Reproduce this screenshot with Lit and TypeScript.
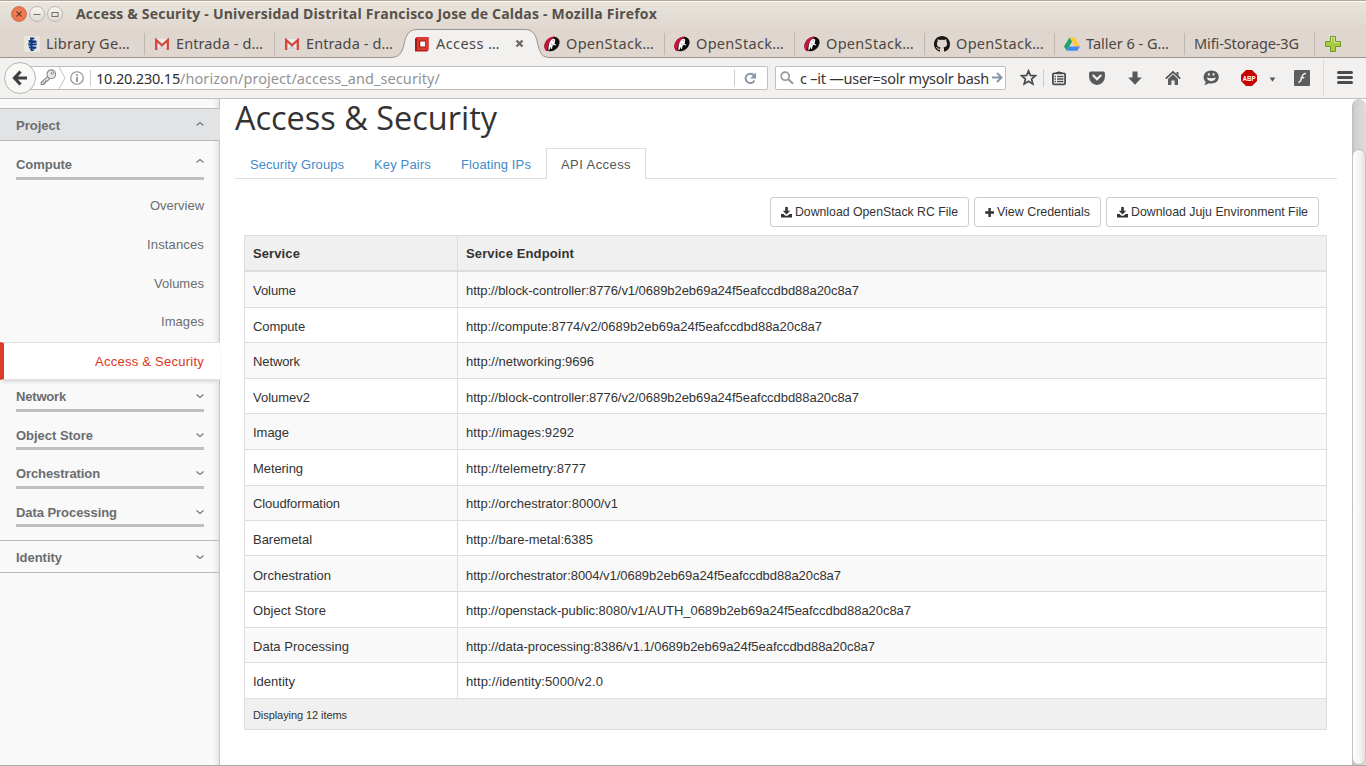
import { LitElement, html, css, svg } from "lit";
import { customElement, property } from "lit/decorators.js";

/** Inline text that is set to a given width through tracking, or through scaling when `squeeze` is on. */
@customElement("fit-text")
class FitText extends LitElement {
  @property({ type: Number }) w = 0;
  @property({ type: Boolean }) squeeze = false;
  @property() text = "";
  static styles = css`
    :host { display: inline-block; white-space: pre; position: relative; }
    .run { display: inline-block; transform-origin: 0 50%; }
  `;
  render() {
    return html`<span class="run">${this.text}</span>`;
  }
  updated() {
    const run = this.renderRoot.querySelector(".run") as HTMLElement;
    if (!run || !this.w) return;
    const natural = run.getBoundingClientRect().width;
    this.style.width = this.w + "px";
    if (this.squeeze) run.style.transform = `scaleX(${this.w / natural})`;
    else run.style.letterSpacing = (this.w - natural) / this.text.length + "px";
  }
}

const fit = (text: string, w: number, squeeze = false) =>
  html`<fit-text .text=${text} .w=${w} .squeeze=${squeeze}></fit-text>`;

const ic = (body: unknown, w = 16, h = w) =>
  html`<svg class="ic" width=${w} height=${h} viewBox="0 0 ${w} ${h}">${body}</svg>`;

const icons: Record<string, () => unknown> = {
  library: () => ic(svg`<rect width="16" height="16" fill="#e8e7dc"/><path d="M6 1.500h4l.5 1.500-1.500.5H6zM4.500 4l7.500.5 1 1.500-1.500 1H5zM3.500 7.500h9.500l-.5 1.800-7.500.4zM4.500 10.500h7.500l.5 1.500-1.500 1-5.500-.5zM6 13.500h4.500L9.500 15H7z" fill="#123a8c"/><path d="M7.500 2v12" stroke="#123a8c" stroke-width="2"/>`),
  gmail: () => ic(svg`<path d="M1.500 3h13v11h-13z" fill="#eceaea"/><path d="M3 13.500l5-5 5 5z" fill="#d4d2d2"/><path d="M2.200 14V4L8 9.300 13.800 4v10" fill="none" stroke="#d44638" stroke-width="2.300"/>`),
  horizon: () => ic(svg`<path d="M1 2.500L3 1h11.500v13L13 15.500H1z" fill="#b81c17"/><path d="M3 1h11.500v13H3z" fill="#dc3b33"/><path d="M1 4h2M1 8h2M1 12h2" stroke="#7e120e"/><path d="M5 4.500h7v7H5z" fill="#a51813"/><path d="M6.200 5.500h5v5h-5z" fill="#fff"/>`),
  rdo: () => ic(svg`<ellipse cx="8" cy="8" rx="8.300" ry="6.400" transform="rotate(-40 8 8)" fill="#0b0b0b"/><path d="M11 .6C6 0 1 5 .3 10c-.3 3 1.200 5 3 5.500C3 10 6 4 11 .6z" fill="#d2103a"/><path d="M4.500 14.500C4 9 6 4 9 2.800c1.500-.5 2.500.5 2.200 2l-.7 2.700 2 1.500-1.500.5-1-1-1.500 1.500-.5 3-1-.2-.5-2-1 3z" fill="#fff"/><path d="M8.500 4.500l1.500.5M7 8l1.500.2" stroke="#555" stroke-width=".6"/>`),
  github: () => ic(svg`<path fill="#161514" d="M8 0C3.580 0 0 3.580 0 8c0 3.540 2.290 6.530 5.470 7.590.4.070.55-.17.55-.38 0-.19-.01-.82-.01-1.490-2.010.37-2.530-.49-2.690-.94-.09-.23-.48-.94-.82-1.130-.28-.15-.68-.52-.01-.53.63-.01 1.080.58 1.230.82.72 1.210 1.870.87 2.330.66.07-.52.28-.87.51-1.070-1.780-.2-3.640-.89-3.640-3.950 0-.87.31-1.590.82-2.150-.08-.2-.36-1.020.08-2.120 0 0 .67-.21 2.200.82.64-.18 1.320-.27 2-.27s1.360.09 2 .27c1.530-1.040 2.200-.82 2.200-.82.44 1.100.16 1.920.08 2.120.51.56.82 1.270.82 2.150 0 3.070-1.870 3.750-3.650 3.950.29.25.54.73.54 1.480 0 1.070-.01 1.930-.01 2.200 0 .21.15.46.55.38A8 8 0 0016 8c0-4.420-3.580-8-8-8z"/>`),
  drive: () => ic(svg`<path d="M5.500 1.500h5L16 10.500h-5z" fill="#fdc935"/><path d="M5.500 1.500L8 5.800 2.700 14.700 0 10.500z" fill="#1fa463"/><path d="M5.300 10.500H16l-2.700 4.300H2.700z" fill="#4285f4"/>`),
  plus: () => ic(svg`<path d="M5.500 .5h5v5h5v5h-5v5h-5v-5h-5v-5h5z" fill="#a9cb3e" stroke="#6f9a2c"/><path d="M6.500 6.500v-5h3v5h5" fill="none" stroke="#d3e58c"/>`),
  close: () => ic(svg`<path d="M1.500 1.500l6 6M7.500 1.500l-6 6" stroke="#6d6a67" stroke-width="2.400"/>`, 9),
  back: () => ic(svg`<path d="M8.500 1.500L2.500 8l6 6.500M3 8h12" fill="none" stroke="#404040" stroke-width="3.200"/>`),
  key: () => ic(svg`<path d="M8.200 7.200L1.200 13.300v2.200h2.600v-1.600h1.800v-1.800h1.700l2.200-2.500z" fill="#e6e6e6" stroke="#858585" stroke-width="1.100"/><circle cx="11.300" cy="5.200" r="4.300" fill="#e9e9e9" stroke="#858585" stroke-width="1.100"/><circle cx="12.300" cy="4.200" r="1.200" fill="#fff" stroke="#858585"/>`, 17),
  info: () => ic(svg`<circle cx="7" cy="7" r="6.300" fill="none" stroke="#8a8a8a" stroke-width="1.100"/><path d="M7 6v5M7 3.200v1.700" stroke="#8a8a8a" stroke-width="1.700"/>`, 14),
  reload: () => ic(svg`<path d="M10 3.500A4.700 4.700 0 1 0 10.500 8.500" fill="none" stroke="#8c99a8" stroke-width="2"/><path d="M12 .5v6H6z" fill="#8c99a8"/>`, 12),
  search: () => ic(svg`<circle cx="5.200" cy="5.200" r="4" fill="none" stroke="#9a9a9a" stroke-width="1.700"/><path d="M8 8l5 4.700" stroke="#9a9a9a" stroke-width="2.200"/>`, 14),
  go: () => ic(svg`<path d="M0 5.500h9M5 1l4.500 4.500L5 10" fill="none" stroke="#8493a5" stroke-width="1.900"/>`, 11),
  star: () => ic(svg`<path d="M8.500 1.900l1.900 4.500 4.900.4-3.700 3.200 1.200 4.900-4.300-2.700-4.300 2.700 1.200-4.900-3.700-3.200 4.900-.4z" fill="none" stroke="#4a4a4a" stroke-width="1.700"/>`, 17),
  clip: () => ic(svg`<rect x="1.900" y="3.400" width="12.200" height="11" rx="1.200" fill="#fff" stroke="#4a4a4a" stroke-width="1.800"/><path d="M5 4V2h1.800a1.400 1.400 0 012.400 0H11v2z" fill="#4a4a4a"/><path d="M3.500 6.500h1.500m1 0H12.500M3.500 9h1.500m1 0H12.500M3.500 11.500h1.500m1 0H12.500" stroke="#4a4a4a" stroke-width="1.300"/>`),
  pocket: () => ic(svg`<path d="M2 1.500h12a1.800 1.800 0 011.900 1.800V7A7.900 7.900 0 01.1 7V3.300A1.800 1.800 0 012 1.500z" fill="#595959"/><path d="M4.300 5.500L8 9.200l3.700-3.700" fill="none" stroke="#f2f1f0" stroke-width="2.100" stroke-linecap="round"/>`),
  down: () => ic(svg`<path d="M5.500 1.500h5v6h4.300L8 14.800 1.200 7.500h4.300z" fill="#585858"/>`),
  home: () => ic(svg`<path d="M.8 8.700L8 2l7.200 6.700" fill="none" stroke="#4f4f4f" stroke-width="1.700"/><path d="M3 9l5-4.700L13 9v6H9.600v-4.500H6.400V15H3zM11.500 2h2v4l-2-1.800z" fill="#5c5c5c"/>`),
  smile: () => ic(svg`<path d="M8.300 .6c4.300 0 7.500 2.800 7.500 6.500s-3.200 6.500-7.500 6.500c-1.300 0-2 0-3-.3-1 1-2.300 1.500-4.300 1.500 1-.8 1.700-1.700 1.700-2.700C1.400 10.900.6 9 .6 7.100.6 3.400 4 .6 8.300.6z" fill="#595959"/><path d="M5.800 3.300v2.300M10.500 3.300v2.300" stroke="#f2f1f0" stroke-width="1.900"/><path d="M3.700 7.600c2.500.9 6.700.9 9.200 0-.6 2.300-2.300 3.600-4.600 3.600S4.300 9.900 3.700 7.600z" fill="#f2f1f0"/>`),
  abp: () => ic(svg`<path d="M5 0h6l5 5v6l-5 5H5l-5-5V5z" fill="#c70000"/><text x="1.500" y="11" textLength="13" lengthAdjust="spacingAndGlyphs" font-family="Liberation Sans, sans-serif" font-weight="700" font-size="8" fill="#fff">ABP</text>`),
  caret: () => ic(svg`<path d="M.7 3.500h5.600L3.500 7.800z" fill="#555"/>`, 7, 8),
  flash: () => ic(svg`<rect width="16" height="16" rx="1" fill="#5d5d5d"/><path d="M12 3.500c-2.600-.4-3.500 1.500-4.200 4C7.200 10 6.400 12 4.300 12.500M6.500 7.800h3.800" fill="none" stroke="#e8e8e8" stroke-width="1.500"/>`),
  menu: () => ic(svg`<path d="M1.500 2.500h13M1.500 7.500h13M1.500 12.500h13" stroke="#4c4c4c" stroke-width="3" stroke-linecap="round"/>`, 16, 15),
  up: () => ic(svg`<path d="M1.500 4.500l3.500-3 3.500 3" fill="none" stroke="#74777a" stroke-width="1.200"/>`, 9, 6),
  dn: () => ic(svg`<path d="M1.500 1.500l3.500 3 3.500-3" fill="none" stroke="#74777a" stroke-width="1.200"/>`, 9, 6),
  dl: () => ic(svg`<path d="M4.200 0h2.600v3.700h2.400L5.500 7.400 1.800 3.700h2.400z" fill="#333"/><path d="M0 7h2.600l1.700 1.700h2.400L8.400 7H11v3.500H0z" fill="#333"/>`, 11),
  add: () => ic(svg`<path d="M3.400 1h2.400v3.200H9v2.500H5.800V10H3.400V6.700H.2V4.200h3.200z" fill="#333"/>`, 9, 11),
};

type Tab = { icon?: string; label: string; w: number; active?: boolean; before?: boolean };
const TABS: Tab[] = [
  { icon: "library", label: "Library Ge…", w: 84 },
  { icon: "gmail", label: "Entrada - d…", w: 87 },
  { icon: "gmail", label: "Entrada - d…", w: 87, before: true },
  { icon: "horizon", label: "Access …", w: 64, active: true },
  { icon: "rdo", label: "OpenStack…", w: 88 },
  { icon: "rdo", label: "OpenStack…", w: 88 },
  { icon: "rdo", label: "OpenStack…", w: 88 },
  { icon: "github", label: "OpenStack…", w: 88 },
  { icon: "drive", label: "Taller 6 - G…", w: 83 },
  { label: "Mifi-Storage-3G", w: 105 },
];

const ROWS: [string, number, string, number][] = [
  ["Volume", 43, "http://block-controller:8776/v1/0689b2eb69a24f5eafccdbd88a20c8a7", 393],
  ["Compute", 52, "http://compute:8774/v2/0689b2eb69a24f5eafccdbd88a20c8a7", 356],
  ["Network", 47, "http://networking:9696", 128],
  ["Volumev2", 57, "http://block-controller:8776/v2/0689b2eb69a24f5eafccdbd88a20c8a7", 393],
  ["Image", 36, "http://images:9292", 108],
  ["Metering", 50, "http://telemetry:8777", 120],
  ["Cloudformation", 87, "http://orchestrator:8000/v1", 152],
  ["Baremetal", 59, "http://bare-metal:6385", 127],
  ["Orchestration", 78, "http://orchestrator:8004/v1/0689b2eb69a24f5eafccdbd88a20c8a7", 375],
  ["Object Store", 73, "http://openstack-public:8080/v1/AUTH_0689b2eb69a24f5eafccdbd88a20c8a7", 445],
  ["Data Processing", 96, "http://data-processing:8386/v1.1/0689b2eb69a24f5eafccdbd88a20c8a7", 409],
  ["Identity", 42, "http://identity:5000/v2.0", 137],
];

@customElement("app-root")
class AppRoot extends LitElement {
  static styles = css`
    :host {
      display: flex; flex-direction: column; width: 1366px; height: 766px; overflow: hidden;
      box-sizing: border-box; border-bottom: 1px solid #b0a9a2; background: #fff;
      font-family: "Liberation Sans", Arial, sans-serif; font-size: 13px; color: #333;
    }
    * { box-sizing: border-box; }
    .ic { display: block; flex: none; }
    .titlebar {
      display: flex; align-items: center; flex: none; height: 29px; border-top: 1px solid #b5a79d;
      padding: 0 0 2px 11px; background: linear-gradient(#fbfaf9 0 1px, #e8e5dd 1px, #dfd6cf);
      font: 700 14px "Open Sans", "Noto Sans", sans-serif; color: #57504a;
    }
    .wb {
      display: grid; place-items: center; width: 16px; height: 16px; margin-right: 2px; border-radius: 50%;
      border: 1px solid #bdb7b0; background: linear-gradient(#f7f5f3, #dedad5);
    }
    .wb.x { background: radial-gradient(#f58a63, #e9663c); border-color: #c9765a; }
    .title { margin-left: 11px; line-height: 26px; }
    .tabs {
      display: flex; flex: none; height: 29px; padding-left: 14px; background: #dfd6cf;
      border-bottom: 1px solid #9b948d; font: 14.5px/29px "Noto Sans", "Open Sans", sans-serif; color: #4b4744;
    }
    .tab { position: relative; display: flex; align-items: center; width: 130px; height: 30px; padding: 0 0 1px 10px; flex: none; }
    .tab .ic { margin-right: 6px; position: relative; }
    .tab.sep::after { content: ""; position: absolute; right: -1px; top: 4px; height: 22px; width: 1px; background: #bfb7b0; }
    .active { z-index: 1; }
    .active .ic.shape { position: absolute; left: -14px; top: 0; }
    .active .gap + .ic { margin: 0; }
    .gap { width: 15px; flex: none; }
    .newtab { padding: 7px 0 0 11px; }
    .toolbar {
      display: flex; align-items: center; flex: none; height: 41px; background: #f2f1f0; border-bottom: 1px solid #c3c0bc;
      padding-bottom: 1px; font: 14.5px/22px "Noto Sans", "Open Sans", sans-serif;
    }
    .back {
      display: grid; place-items: center; width: 32px; height: 32px; margin-left: 4px; flex: none; border-radius: 50%; z-index: 1;
      border: 1px solid #b8b5b2; background: #f8f8f7;
    }
    .field { display: flex; align-items: center; height: 24px; border: 1px solid #c1bebb; border-radius: 2px; background: #fff; flex: none; }
    .url { width: 741px; margin-left: -9px; padding-left: 13px; color: #939393; border-left: 0; }
    .url b { font-weight: 400; color: #2d2d2d; }
    .chev { margin: 0 4px 0 1px; }
    .vr { width: 1px; height: 16px; background: #ccc; flex: none; }
    .url .v1 { margin: 0 5px 0 6px; }
    .url .v2 { margin: 0 9px 0 auto; }
    .url .re { margin-right: 11px; display: block; }
    .find { width: 231px; margin-left: 7px; padding: 0 3px 0 4px; color: #333; }
    .clipped { margin: 0 3px 0 6px; }
    .cell { display: grid; place-items: center; flex: none; width: 38px; height: 24px; }
    .cell.first { width: 24px; margin-left: 10px; }
    .cell.list { width: 30px; margin-right: 4px; }
    .cell.car { width: 8px; }
    .cell.fl { width: 42px; margin-left: 5px; }
    .cell.mn { width: 43px; height: 36px; border-left: 1px solid #dcdad8; }
    .tv { height: 18px; margin-left: 3px; }
    .body { display: flex; flex: 1; min-height: 0; }
    .side {
      width: 220px; flex: none; padding-top: 9px; border-right: 1px solid #c6c7c8; color: #6a6d70;
      background: linear-gradient(90deg, #f9f9f9 213px, #e6e6e6);
    }
    .panel {
      display: flex; justify-content: space-between; height: 33px; line-height: 33px; padding: 0 16px; font-weight: 700;
      border: solid #b9babb; border-width: 1px 0; margin-right: -1px;
    }
    .panel .ic { margin-top: 13px; }
    .panel.open { background: #e2e3e4; }
    .panel.open .ic { margin-top: 12px; }
    .group { display: flex; justify-content: space-between; margin: 0 15px 0 16px; border-bottom: 3px solid #bfc0c1; font-weight: 700; line-height: 22px; }
    .group .ic { margin-top: 7px; }
    .g0 { height: 26px; margin-top: 13px; }
    .g0 .ic { margin-top: 4px; }
    .g1 { height: 26px; margin-top: 6px; }
    .g2 { height: 25px; margin-top: 13px; }
    .g3 { height: 25px; margin-top: 14px; }
    .g3.group { line-height: 20px; }
    .g3 .ic { margin-top: 6px; }
    .links { display: flex; flex-direction: column; align-items: flex-end; padding: 6px 16px 0 0; margin-right: -1px; height: 162px; }
    .links span { height: 38.8px; line-height: 40px; }
    .current {
      display: flex; justify-content: flex-end; height: 38px; line-height: 37px; padding-right: 16px; margin-right: -1px;
      background: #fff; color: #dc3522; border: solid #e1e1e1; border-width: 1px 0; border-left: 4px solid #dc3c26; box-shadow: 0 3px 4px -2px #ccc; position: relative;
    }
    .ident { margin-top: 13px; }
    .main { flex: 1; padding: 0 15px; min-width: 0; }
    h1 { margin: 0; height: 49px; font: 400 33px/38px "Open Sans", "Noto Sans", sans-serif; color: #333; }
    .nav { display: flex; height: 31px; border-bottom: 1px solid #ddd; color: #428bca; line-height: 34px; }
    .nav span { padding-left: 15px; }
    .nav .on { width: 100px; height: 31px; margin-left: 1px; padding-left: 14px; border: 1px solid #ddd; border-bottom: 0; background: #fff; color: #555; line-height: 32px; }
    .n1 { width: 124px; } .n2 { width: 87px; } .n3 { width: 99px; }
    .actions { display: flex; justify-content: flex-end; gap: 5px; padding: 18px 18px 0 0; height: 56px; font-size: 13px; }
    .btn { display: flex; align-items: center; height: 30px; padding: 0 0 0 10px; border: 1px solid #ccc; border-radius: 3px; line-height: 28px; }
    .btn .ic { margin-right: 3px; }
    .b1 { width: 199px; } .b2 { width: 127px; } .b3 { width: 213px; }
    .table { width: 1083px; margin-left: 9px; border: 1px solid #ddd; }
    .row { display: flex; height: 36px; border-bottom: 1px solid #ddd; line-height: 37px; }
    .row:nth-child(even) { background: #f9f9f9; }
    .row.s { height: 35px; }
    .row.hi { line-height: 35px; }
    .row.lo { line-height: 39px; }
    .row div { padding-left: 8px; }
    .row div:first-child { width: 213px; border-right: 1px solid #ddd; flex: none; }
    .head { height: 36px; border-bottom-width: 2px; background: #f0f0f0; font-weight: 700; line-height: 35px; }
    .foot { height: 30px; padding-left: 8px; background: #f0f0f0; font-size: 11px; line-height: 33px; }
    .scroll { width: 14px; flex: none; background: linear-gradient(90deg, #bdbbb9, #d2d0ce 3px, #dedddb); border-radius: 7px 7px 0 0; padding-top: 50px; display: flex; }
    .thumb { flex: 1; border: 1px solid #c4c1be; border-radius: 7px; background: linear-gradient(90deg, #fff, #f4f3f1 60%, #e3e1df); }
  `;

  tab(t: Tab) {
    const sep = !t.active && !t.before;
    return html`<div class="tab ${t.active ? "active" : ""} ${sep ? "sep" : ""}">
      ${t.active
        ? html`<svg class="ic shape" width="160" height="29" viewBox="0 0 160 29"><path d="M0 29V28.500C9 28.300 11.500 25 13.800 16 16 6.500 18 .7 27 .5H135c9 .2 11 6 13 15.500 2.300 9 4 12.300 12 12.500V29z" fill="#f2f1f0"/><path d="M0 28.500C9 28.300 11.500 25 13.800 16 16 6.500 18 .7 27 .5H135c9 .2 11 6 13 15.500 2.300 9 4 12.300 12 12.500" fill="none" stroke="#9b948d"/></svg>`
        : ""}
      ${t.icon ? icons[t.icon]() : ""}${fit(t.label, t.w)}
      ${t.active ? html`<span class="gap"></span>${icons.close()}` : ""}
    </div>`;
  }

  render() {
    const short = new Set([1, 3, 6, 7, 10]);
    const nudge: Record<number, string> = { 6: "hi", 8: "lo" };
    const group = (cls: string, label: string, w: number, open = false) =>
      html`<div class="group ${cls}">${fit(label, w)}${open ? icons.up() : icons.dn()}</div>`;
    return html`
      <div class="titlebar">
        <span class="wb x">${ic(svg`<path d="M1.500 1.500l5 5M6.500 1.500l-5 5" stroke="#6d3a28" stroke-width="1.200"/>`, 8)}</span>
        <span class="wb">${ic(svg`<path d="M.5 4.500h7" stroke="#76706a"/>`, 8)}</span>
        <span class="wb">${ic(svg`<rect x="1" y="2.500" width="6" height="4" fill="none" stroke="#76706a"/>`, 8)}</span>
        <span class="title">${fit("Access & Security - Universidad Distrital Francisco Jose de Caldas - Mozilla Firefox", 581)}</span>
      </div>
      <div class="tabs">${TABS.map((t) => this.tab(t))}<div class="newtab">${icons.plus()}</div></div>
      <div class="toolbar">
        <span class="back">${icons.back()}</span>
        <div class="field url">
          ${icons.key()}
          <svg class="ic chev" width="8" height="22" viewBox="0 0 8 22"><path d="M1 0L7 11 1 22" fill="none" stroke="#c4c2c0"/></svg>
          ${icons.info()}<span class="vr v1"></span><b>${fit("10.20.230.15", 84)}</b>${fit("/horizon/project/access_and_security/", 260)}
          <span class="vr v2"></span><span class="re">${icons.reload()}</span>
        </div>
        <div class="field find">${icons.search()}<span class="clipped">${fit("c –it —user=solr mysolr bash", 189)}</span>${icons.go()}</div>
        <span class="cell first">${icons.star()}</span><span class="vr tv"></span>
        <span class="cell list">${icons.clip()}</span>
        ${["pocket", "down", "home", "smile", "abp"].map((n) => html`<span class="cell">${icons[n]()}</span>`)}
        <span class="cell car">${icons.caret()}</span>
        <span class="cell fl">${icons.flash()}</span>
        <span class="cell mn">${icons.menu()}</span>
      </div>
      <div class="body">
        <div class="side">
          <div class="panel open">${fit("Project", 44)}${icons.up()}</div>
          ${group("g0", "Compute", 56, true)}
          <div class="links">
            <span>${fit("Overview", 54)}</span><span>${fit("Instances", 57)}</span>
            <span>${fit("Volumes", 50)}</span><span>${fit("Images", 43)}</span>
          </div>
          <div class="current">${fit("Access & Security", 109)}</div>
          ${group("g1", "Network", 50)} ${group("g2", "Object Store", 77)}
          ${group("g3", "Orchestration", 84)} ${group("g2", "Data Processing", 101)}
          <div class="panel ident">${fit("Identity", 46)}${icons.dn()}</div>
        </div>
        <div class="main">
          <h1>${fit("Access & Security", 262, true)}</h1>
          <div class="nav">
            <span class="n1">${fit("Security Groups", 94)}</span><span class="n2">${fit("Key Pairs", 57)}</span>
            <span class="n3">${fit("Floating IPs", 70)}</span><span class="on">${fit("API Access", 70)}</span>
          </div>
          <div class="actions">
            <div class="btn b1">${icons.dl()}${fit("Download OpenStack RC File", 163, true)}</div>
            <div class="btn b2">${icons.add()}${fit("View Credentials", 93, true)}</div>
            <div class="btn b3">${icons.dl()}${fit("Download Juju Environment File", 177, true)}</div>
          </div>
          <div class="table">
            <div class="row head"><div>${fit("Service", 47)}</div><div>${fit("Service Endpoint", 108)}</div></div>
            ${ROWS.map(
              ([name, w, url, uw], i) =>
                html`<div class="row ${short.has(i) ? "s" : ""} ${nudge[i] ?? ""}"><div>${fit(name, w)}</div><div>${fit(url, uw)}</div></div>`
            )}
            <div class="foot">${fit("Displaying 12 items", 94)}</div>
          </div>
        </div>
        <div class="scroll"><div class="thumb"></div></div>
      </div>
    `;
  }
}
